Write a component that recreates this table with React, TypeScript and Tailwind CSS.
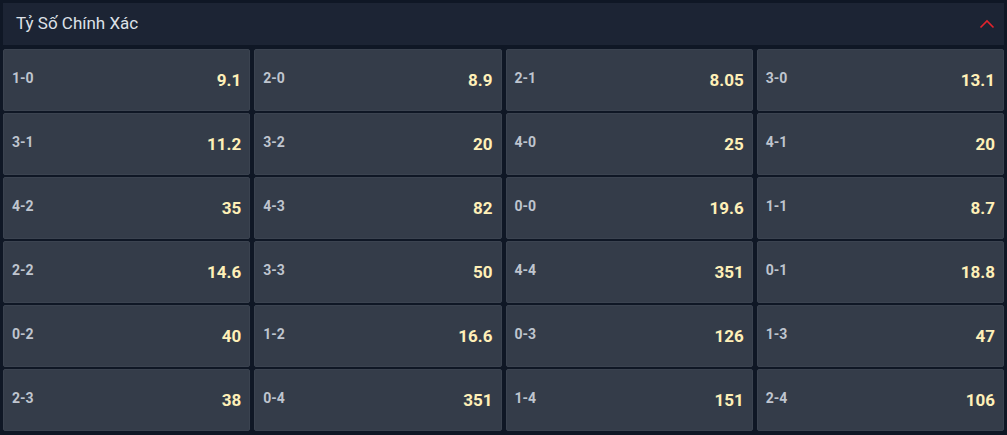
import { useState } from 'react';

const SCORES: Array<[string, string]> = [
  ['1-0', '9.1'],
  ['2-0', '8.9'],
  ['2-1', '8.05'],
  ['3-0', '13.1'],
  ['3-1', '11.2'],
  ['3-2', '20'],
  ['4-0', '25'],
  ['4-1', '20'],
  ['4-2', '35'],
  ['4-3', '82'],
  ['0-0', '19.6'],
  ['1-1', '8.7'],
  ['2-2', '14.6'],
  ['3-3', '50'],
  ['4-4', '351'],
  ['0-1', '18.8'],
  ['0-2', '40'],
  ['1-2', '16.6'],
  ['0-3', '126'],
  ['1-3', '47'],
  ['2-3', '38'],
  ['0-4', '351'],
  ['1-4', '151'],
  ['2-4', '106'],
];

export default function App() {
  const [isOpen, setIsOpen] = useState(true);

  return (
    <div className="w-[1007px] h-[435px] bg-[#0f1725] p-[3px] font-['Roboto',_'Noto_Sans',_sans-serif]">
      <button
        type="button"
        onClick={() => setIsOpen(!isOpen)}
        className="w-full h-[42px] flex items-center justify-between pl-[13px] pr-[9px] bg-[#1c2434]"
      >
        <span className="text-[17px] text-[#dde1e8]">Tỷ Số Chính Xác</span>
        <svg width="16" height="10" viewBox="0 0 16 10" fill="none" className={isOpen ? '' : 'rotate-180'}>
          <path d="M1.5 8.5 L8 2 L14.5 8.5" stroke="#e3232c" strokeWidth="1.6" />
        </svg>
      </button>

      {isOpen && (
        <div className="mt-[4px] grid grid-cols-4 gap-x-[4px] gap-y-[2px]">
          {SCORES.map(([score, odds]) => (
            <div
              key={score}
              className="h-[62px] flex items-center justify-between pl-[8px] pr-[8px] rounded-[2px] bg-[#343c49] border border-[#3b4350]"
            >
              <span className="text-[14px] font-bold text-[#bfc5cf] -mt-[3px]">{score}</span>
              <span className="text-[17px] font-bold text-[#fff0b8] mt-[2px]">{odds}</span>
            </div>
          ))}
        </div>
      )}
    </div>
  );
}
